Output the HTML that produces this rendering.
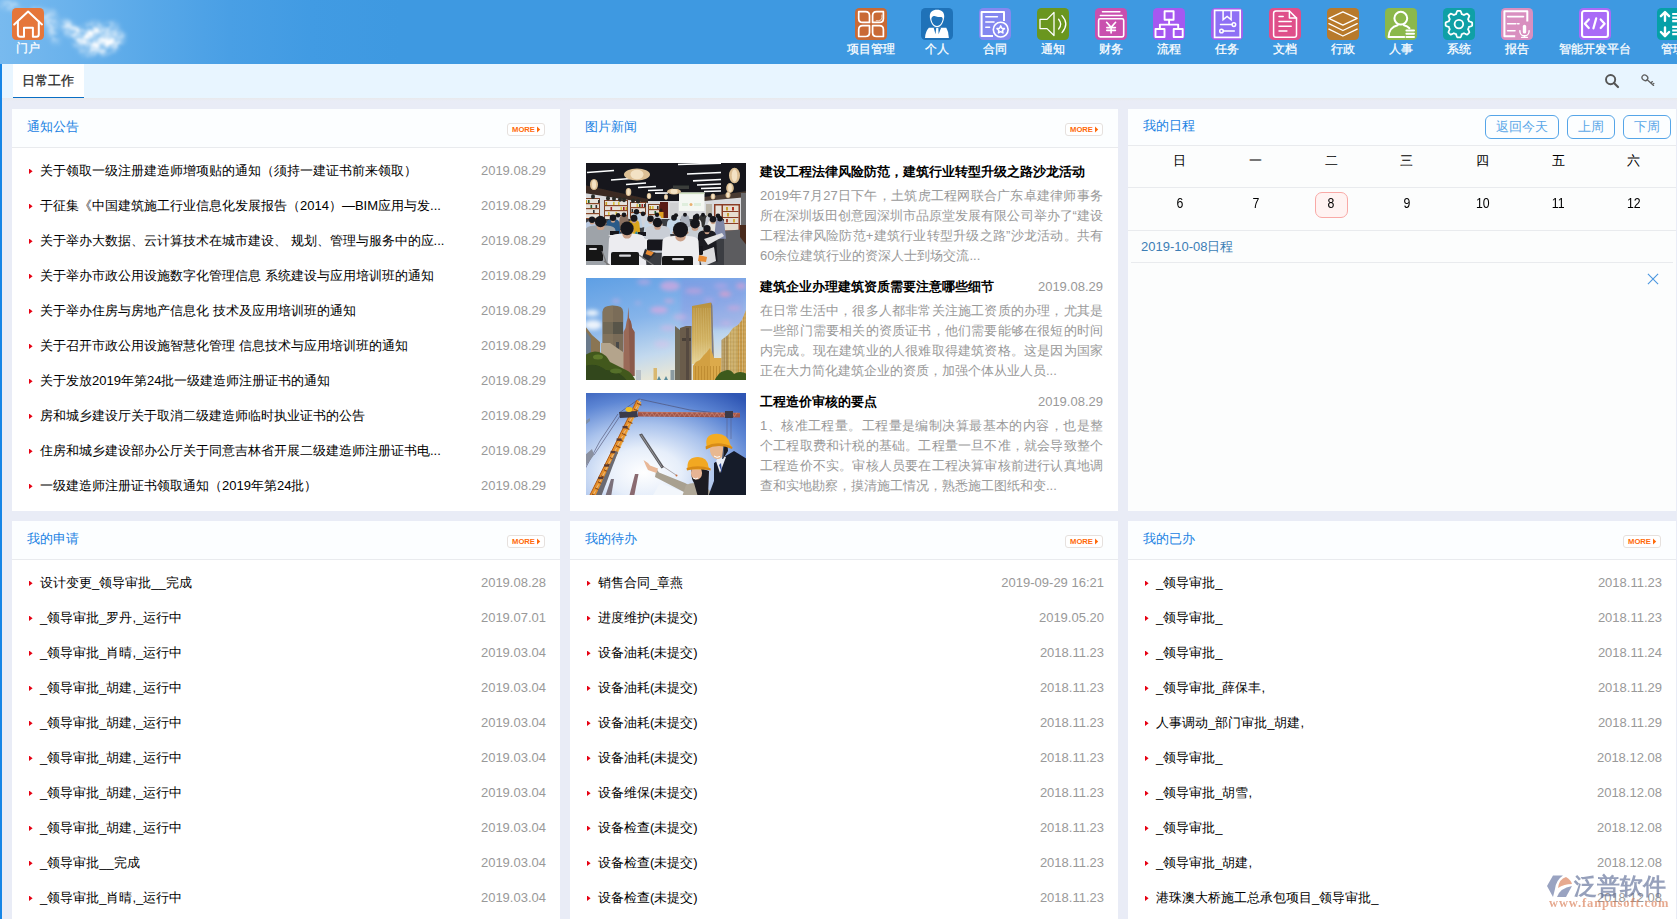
<!DOCTYPE html>
<html lang="zh">
<head>
<meta charset="utf-8">
<title>门户</title>
<style>
*{box-sizing:border-box;margin:0;padding:0}
html,body{width:1677px;height:919px;overflow:hidden}
body{font-family:"Liberation Sans",sans-serif;font-size:13px;color:#000;background:#e9ecf6;position:relative}
ul{list-style:none}
#hdr{position:absolute;left:0;top:0;width:1677px;height:64px;overflow:hidden;
 background:linear-gradient(90deg,#78baef 0px,#6ab2ec 70px,#58a8e8 150px,#499fe5 230px,#419be3 310px,#3e99e1 400px,#3e99e1 1677px)}
.ni{position:absolute;top:8px;width:32px;height:50px}
.ni svg{display:block}
.ni b{position:absolute;left:-40px;width:112px;top:34px;-webkit-text-stroke:0.25px #fff;text-align:center;font-weight:normal;font-size:12px;line-height:15px;color:#fff;white-space:nowrap}
#stripe{position:absolute;left:0;top:64px;width:2px;height:855px;background:#1685e6}
#tabs{position:absolute;left:2px;top:64px;width:1675px;height:34px;background:#e8f5ff}
#tabs .tab{position:absolute;left:11px;top:0;width:71px;height:34px;background:#fff;border-bottom:1px solid #0a6ec4;
 text-align:center;padding-right:2px;line-height:34px;font-size:13px;color:#2a2a2a;-webkit-text-stroke:0.3px #2a2a2a}
#tabshadow{position:absolute;left:2px;top:98px;width:1675px;height:3px;background:linear-gradient(#e8e9ec,#e9ecf6)}
.tic{position:absolute;top:9px}
.panel{position:absolute;background:#fff;overflow:hidden}
.ph{height:38px;border-bottom:1px solid #e9ebee;box-sizing:content-box;position:relative;background:#fcfeff}
.ph .t{position:absolute;left:15px;top:0;line-height:36px;font-size:13px;color:#1b82e3}
.more{position:absolute;right:15px;top:14px;width:38px;height:13px;border:1px solid #e6e1de;border-radius:3px;background:#fff}
.more svg{display:block}
ul.lst{padding-top:5px}
ul.lst li{height:35px;line-height:36px;position:relative;padding-left:28px;white-space:nowrap;font-size:13px}
ul.lst li:before{content:"";position:absolute;left:17px;top:15.6px;width:3.6px;height:5.4px;background:#e60012;clip-path:polygon(0 0,100% 50%,0 100%)}
ul.lst li span{position:absolute;right:14px;top:0;color:#999}
.news{position:absolute;left:16px;width:517px;height:102px}
.news .im{position:absolute;left:0;top:0;width:160px;height:102px;overflow:hidden}
.news .im svg{display:block}
.news h4{position:absolute;left:174px;top:0;font-size:13px;line-height:18px;font-weight:bold;white-space:nowrap}
.news .d{position:absolute;right:0;top:0;line-height:18px;color:#999}
.news .tx{position:absolute;left:174px;top:23px;width:343px;color:#999;line-height:20px}
.news .tx div{height:20px;text-align:justify;text-align-last:justify;overflow:hidden}
.news .tx div.l{text-align-last:left}
.cbtn{position:absolute;top:6px;height:24px;border:1px solid #55a5e8;border-radius:6px;color:#5aa7e8;font-size:13px;line-height:21px;text-align:center}
.cal{position:absolute;left:14px;width:530px;display:flex}
.cal div{width:75.67px;text-align:center;font-size:13px}
.cal i{display:inline-block;font-style:normal;font-size:14px;transform:scaleX(.88)}
.today{position:absolute;left:187px;top:83px;width:33px;height:26px;border:1px solid #f9a9a6;border-radius:7px;background:#fff3f2}
.hl{position:absolute;left:0;width:548px;height:1px;background:#e9ebee}
</style>
</head>
<body>
<div id="hdr"><svg style="position:absolute;left:0;top:0" width="180" height="64" viewBox="0 0 180 64"><defs><filter id="cb" x="-20%" y="-20%" width="140%" height="140%"><feGaussianBlur stdDeviation="2.2" result="b"/><feTurbulence type="fractalNoise" baseFrequency="0.11 0.13" numOctaves="3" seed="7" result="n"/><feColorMatrix in="n" type="matrix" values="0 0 0 0 1  0 0 0 0 1  0 0 0 0 1  1.9 0 0 0 -0.38" result="m"/><feComposite in="b" in2="m" operator="in" result="c"/><feGaussianBlur in="c" stdDeviation="0.8"/></filter></defs><g fill="#fff" style="filter:blur(4px)"><ellipse cx="99" cy="38" rx="20" ry="13" opacity="0.2"/><ellipse cx="50" cy="24" rx="7" ry="12" opacity="0.14"/></g><g filter="url(#cb)" fill="#fff"><ellipse cx="100" cy="38" rx="17" ry="12" opacity="0.95"/><ellipse cx="94" cy="29" rx="10" ry="7" opacity="0.7"/><ellipse cx="108" cy="44" rx="12" ry="8" opacity="0.8"/><ellipse cx="112" cy="27" rx="7" ry="5" opacity="0.6"/><ellipse cx="82" cy="42" rx="10" ry="6" opacity="0.7"/><ellipse cx="73" cy="31" rx="10" ry="6" opacity="0.75"/><ellipse cx="98" cy="51" rx="12" ry="5" opacity="0.55"/><ellipse cx="119" cy="38" rx="6" ry="7" opacity="0.6"/><ellipse cx="66" cy="24" rx="7" ry="4" opacity="0.65"/><ellipse cx="88" cy="52" rx="10" ry="4" opacity="0.5"/><ellipse cx="80" cy="35" rx="8" ry="6" opacity="0.6"/><ellipse cx="50" cy="18" rx="7" ry="9" opacity="0.6"/><ellipse cx="53" cy="32" rx="5" ry="8" opacity="0.5"/><ellipse cx="9" cy="5" rx="9" ry="4" opacity="0.6"/><ellipse cx="38" cy="11" rx="8" ry="4" opacity="0.45"/><ellipse cx="56" cy="40" rx="4" ry="5" opacity="0.4"/><ellipse cx="20" cy="12" rx="8" ry="4" opacity="0.3"/></g></svg>
<div class="ni" style="left:12px"><svg width="32" height="32" viewBox="0 0 32 32"><rect width="32" height="32" rx="4.5" fill="#e5763a"/><path d="M2.2 16.6 L16.1 3.6 L30 16.4" stroke="#fff" fill="none" stroke-linecap="round" stroke-linejoin="round" stroke-width="2"/><path d="M5.9 13.4 V26.3 Q5.9 28.8 8.4 28.8 H12 V19.8 H20.9 V28.8 H24.3 Q26.8 28.8 26.8 26.3 V13.4" stroke="#fff" fill="none" stroke-linecap="round" stroke-linejoin="round" stroke-width="2"/></svg><b style="top:33px">门户</b></div>
<div class="ni" style="left:855px"><svg width="32" height="32" viewBox="0 0 32 32"><rect width="32" height="32" rx="4.5" fill="#c96a35"/><g stroke="#fff" fill="none" stroke-linecap="round" stroke-linejoin="round" stroke-width="1.7" stroke-linejoin="miter"><path d="M3.7 3.7 H10.5 Q14.5 3.7 14.5 7.7 V14.4 H7.7 Q3.7 14.4 3.7 10.4Z"/><path d="M21.6 3.7 H28.4 V10.4 Q28.4 14.4 24.4 14.4 H17.6 V7.7 Q17.6 3.7 21.6 3.7Z"/><path d="M7.7 17.7 H14.5 V24.5 Q14.5 28.5 10.5 28.5 H3.7 V21.7 Q3.7 17.7 7.7 17.7Z"/><path d="M17.6 17.7 H24.4 Q28.4 17.7 28.4 21.7 V28.5 H21.6 Q17.6 28.5 17.6 24.5Z"/><path d="M26.9 7 V9.6 Q26.9 12.6 23.6 12.7 H21.2" stroke-width="0.8" opacity="0.85"/></g></svg><b>项目管理</b></div>
<div class="ni" style="left:921px"><svg width="32" height="32" viewBox="0 0 32 32"><rect width="32" height="32" rx="4.5" fill="#1f72b8"/><path d="M7.9 19.8 H25.3 Q27.6 23.5 27.9 29.9 H4 Q4.4 23.5 7.9 19.8Z" fill="#fff"/><path d="M12.6 19.5 L15.3 19.5 L14.5 26.2Z M17.3 19.5 L20.2 19.5 L17.6 26.2Z" fill="#1f72b8"/><path d="M16 1.7 C20.5 1.7 23.2 4 23.2 8 C23.2 9.5 23 10.5 22.8 11.2 C22.5 13 21.5 15.5 20.3 17 C19 18.6 17.5 19.1 16 19.1 C14.5 19.1 13 18.6 11.7 17 C10.5 15.5 9.5 13 9.2 11.2 C9 10.5 8.8 9.5 8.8 8 C8.8 4 11.5 1.7 16 1.7Z" fill="#fff"/><path d="M10.3 11 C10.6 9.5 11.5 8.3 13 8.1 C14.5 7.9 15.5 8.9 17 9 C18.5 9.1 20 8.6 21 9.3 C21.6 9.8 21.8 10.5 21.7 11.2 C21.4 13 20.5 15 19.5 16.3 C18.5 17.5 17.2 17.9 16 17.9 C14.8 17.9 13.5 17.5 12.5 16.3 C11.5 15 10.6 13 10.3 11Z" fill="#1f72b8"/></svg><b>个人</b></div>
<div class="ni" style="left:979px"><svg width="32" height="32" viewBox="0 0 32 32"><rect width="32" height="32" rx="4.5" fill="#8488f0"/><path d="M25 13 V4 H2.6 V28.1 H14" stroke="#fff" fill="none" stroke-linecap="butt" stroke-linejoin="round" stroke-width="2" /><g stroke="#fff" fill="none" stroke-linecap="round" stroke-linejoin="round" stroke-width="1.6"><path d="M6.8 8.7 H18.4 M6.8 14 H15 M6.8 19.3 H10.6"/></g><circle cx="21.7" cy="21.6" r="7.4" fill="#8488f0" stroke="#fff" stroke-width="1.6"/><path d="M21.70 17.90 L22.82 20.26 L25.41 20.59 L23.51 22.39 L23.99 24.96 L21.70 23.70 L19.41 24.96 L19.89 22.39 L17.99 20.59 L20.58 20.26Z" stroke="#fff" fill="none" stroke-linecap="round" stroke-linejoin="round" stroke-width="1.5"/></svg><b>合同</b></div>
<div class="ni" style="left:1037px"><svg width="32" height="32" viewBox="0 0 32 32"><rect width="32" height="32" rx="4.5" fill="#6a961f"/><g stroke="#fff" fill="none" stroke-linecap="round" stroke-linejoin="round" stroke-width="1.3"><path d="M3 11.4 H10 L17 4.4 V27.5 L10 20.6 H3Z"/><path d="M21.6 11.2 Q25.8 16 21.6 21"/><path d="M25 7.6 Q32.6 16 25 24.6"/></g></svg><b>通知</b></div>
<div class="ni" style="left:1095px"><svg width="32" height="32" viewBox="0 0 32 32"><rect width="32" height="32" rx="4.5" fill="#c94fae"/><g stroke="#fff" fill="none" stroke-linecap="round" stroke-linejoin="round"><path d="M7.4 3.8 H24.9 M5.3 7.5 H27.1" stroke-width="1.4"/><rect x="3.6" y="10.8" width="25.1" height="18.1" rx="1.6" stroke-width="1.6"/><path d="M11.6 14.3 L16.1 19.4 L20.6 14.3 M16.1 19.4 V25 M11.8 19.6 H20.4 M11.8 22.4 H20.4" stroke-width="1.6"/></g></svg><b>财务</b></div>
<div class="ni" style="left:1153px"><svg width="32" height="32" viewBox="0 0 32 32"><rect width="32" height="32" rx="4.5" fill="#a558f0"/><g stroke="#fff" fill="none" stroke-linecap="round" stroke-linejoin="round" stroke-width="1.9" stroke-linejoin="miter"><rect x="11.6" y="3.3" width="9" height="8.4"/><path d="M16.1 11.8 V16.6 M6.9 21 V16.6 H25.2 V21"/><rect x="2.5" y="21" width="9" height="8"/><rect x="20.7" y="21" width="9" height="8"/></g></svg><b>流程</b></div>
<div class="ni" style="left:1211px"><svg width="32" height="32" viewBox="0 0 32 32"><rect width="32" height="32" rx="4.5" fill="#a45fec"/><rect x="3.6" y="2.4" width="25.6" height="27" fill="#8e70f5" stroke="#fff" stroke-width="1.7"/><g stroke="#fff" fill="none" stroke-linecap="round" stroke-linejoin="round" stroke-width="1.5"><path d="M12.1 2.8 V11.6 L16.1 8.4 L20.1 11.6 V2.8" stroke-linejoin="miter"/><path d="M9.5 16.6 H21 M12.4 23 H23.3"/><circle cx="22.9" cy="16.6" r="1.8"/><circle cx="10.5" cy="23" r="1.8"/></g></svg><b>任务</b></div>
<div class="ni" style="left:1269px"><svg width="32" height="32" viewBox="0 0 32 32"><rect width="32" height="32" rx="4.5" fill="#df4f8a"/><g stroke="#fff" fill="none" stroke-linecap="round" stroke-linejoin="round" stroke-width="1.5"><path d="M7 3 H20.4 L27.5 10.1 V26.9 Q27.5 29.2 25.2 29.2 H7 Q4.6 29.2 4.6 26.9 V5.3 Q4.6 3 7 3Z"/><path d="M20.4 3 V10.1 H27.5"/><path d="M10 8.6 H14.2 M10 13.4 H22.2 M10 18.2 H22.2 M10 23 H17.9"/></g></svg><b>文档</b></div>
<div class="ni" style="left:1327px"><svg width="32" height="32" viewBox="0 0 32 32"><rect width="32" height="32" rx="4.5" fill="#b87a2b"/><g stroke="#fff" fill="none" stroke-linecap="round" stroke-linejoin="round" stroke-width="1.3"><path d="M1.9 10.3 L15.9 3.8 L30.2 10.3 L15.9 17.2Z"/><path d="M1.9 15.6 L15.9 22.5 L30.2 15.6"/><path d="M1.9 21.1 L15.9 28 L30.2 21.1"/></g></svg><b>行政</b></div>
<div class="ni" style="left:1385px"><svg width="32" height="32" viewBox="0 0 32 32"><rect width="32" height="32" rx="4.5" fill="#8bb84b"/><g stroke="#fff" fill="none" stroke-linecap="round" stroke-linejoin="round" stroke-width="2"><circle cx="15.8" cy="10.2" r="6.4"/><path d="M19.2 28.9 H3.6 C3.6 22.5 7.5 18.4 12.6 17.2 M19 17.2 C21.2 17.8 23 18.8 24.4 20.2"/><path d="M21.4 22.6 H29 M21.4 25.8 H29 M21.4 29 H29"/></g></svg><b>人事</b></div>
<div class="ni" style="left:1443px"><svg width="32" height="32" viewBox="0 0 32 32"><rect width="32" height="32" rx="4.5" fill="#0fa0a6"/><path d="M29.20 16.10 L29.19 16.62 L29.16 17.14 L29.11 17.66 L28.36 18.07 L27.52 18.41 L26.68 18.69 L25.91 18.92 L25.79 19.31 L25.66 19.70 L25.51 20.08 L25.34 20.45 L25.17 20.82 L24.97 21.18 L25.35 21.89 L25.75 22.68 L26.10 23.51 L26.34 24.33 L26.01 24.74 L25.67 25.13 L25.30 25.50 L24.93 25.87 L24.54 26.21 L24.13 26.54 L23.31 26.30 L22.48 25.95 L21.69 25.55 L20.98 25.17 L20.62 25.37 L20.25 25.54 L19.88 25.71 L19.50 25.86 L19.11 25.99 L18.72 26.11 L18.49 26.88 L18.21 27.72 L17.87 28.56 L17.46 29.31 L16.94 29.36 L16.42 29.39 L15.90 29.40 L15.38 29.39 L14.86 29.36 L14.34 29.31 L13.93 28.56 L13.59 27.72 L13.31 26.88 L13.08 26.11 L12.69 25.99 L12.30 25.86 L11.92 25.71 L11.55 25.54 L11.18 25.37 L10.82 25.17 L10.11 25.55 L9.32 25.95 L8.49 26.30 L7.67 26.54 L7.26 26.21 L6.87 25.87 L6.50 25.50 L6.13 25.13 L5.79 24.74 L5.46 24.33 L5.70 23.51 L6.05 22.68 L6.45 21.89 L6.83 21.18 L6.63 20.82 L6.46 20.45 L6.29 20.08 L6.14 19.70 L6.01 19.31 L5.89 18.92 L5.12 18.69 L4.28 18.41 L3.44 18.07 L2.69 17.66 L2.64 17.14 L2.61 16.62 L2.60 16.10 L2.61 15.58 L2.64 15.06 L2.69 14.54 L3.44 14.13 L4.28 13.79 L5.12 13.51 L5.89 13.28 L6.01 12.89 L6.14 12.50 L6.29 12.12 L6.46 11.75 L6.63 11.38 L6.83 11.02 L6.45 10.31 L6.05 9.52 L5.70 8.69 L5.46 7.87 L5.79 7.46 L6.13 7.07 L6.50 6.70 L6.87 6.33 L7.26 5.99 L7.67 5.66 L8.49 5.90 L9.32 6.25 L10.11 6.65 L10.82 7.03 L11.18 6.83 L11.55 6.66 L11.92 6.49 L12.30 6.34 L12.69 6.21 L13.08 6.09 L13.31 5.32 L13.59 4.48 L13.93 3.64 L14.34 2.89 L14.86 2.84 L15.38 2.81 L15.90 2.80 L16.42 2.81 L16.94 2.84 L17.46 2.89 L17.87 3.64 L18.21 4.48 L18.49 5.32 L18.72 6.09 L19.11 6.21 L19.50 6.34 L19.88 6.49 L20.25 6.66 L20.62 6.83 L20.98 7.03 L21.69 6.65 L22.48 6.25 L23.31 5.90 L24.13 5.66 L24.54 5.99 L24.93 6.33 L25.30 6.70 L25.67 7.07 L26.01 7.46 L26.34 7.87 L26.10 8.69 L25.75 9.52 L25.35 10.31 L24.97 11.02 L25.17 11.38 L25.34 11.75 L25.51 12.12 L25.66 12.50 L25.79 12.89 L25.91 13.28 L26.68 13.51 L27.52 13.79 L28.36 14.13 L29.11 14.54 L29.16 15.06 L29.19 15.58Z" stroke="#fff" fill="none" stroke-linecap="round" stroke-linejoin="round" stroke-width="1.8"/><circle cx="15.9" cy="16.1" r="4.3" stroke="#fff" fill="none" stroke-linecap="round" stroke-linejoin="round" stroke-width="1.8"/></svg><b>系统</b></div>
<div class="ni" style="left:1501px"><svg width="32" height="32" viewBox="0 0 32 32"><rect width="32" height="32" rx="4.5" fill="#d98fc0"/><path d="M26.3 13.6 V3.3 H3.4 V28.3 H14.2" stroke="#fff" fill="none" stroke-linecap="butt" stroke-linejoin="round" stroke-width="2"/><g stroke="#fff" fill="none" stroke-linecap="round" stroke-linejoin="round" stroke-width="1.6"><path d="M6.6 8.6 H22.5 M6.6 15.7 H14.8 M16.6 15.7 H18 M6.6 22.7 H14"/></g><rect x="21.8" y="16.8" width="3.4" height="8.8" rx="1.7" fill="#fff"/><g stroke="#fff" fill="none" stroke-linecap="round" stroke-linejoin="round" stroke-width="1.4"><path d="M18.9 22.6 V23.2 A4.6 4.6 0 0 0 28.1 23.2 V22.6"/><path d="M23.5 27.9 V29.3 M20.6 29.4 H26.4"/></g></svg><b>报告</b></div>
<div class="ni" style="left:1579px"><svg width="32" height="32" viewBox="0 0 32 32"><rect width="32" height="32" rx="4.5" fill="#a96bf7"/><rect x="3.05" y="3.05" width="25.9" height="25.9" rx="2" stroke="#fff" fill="none" stroke-linecap="round" stroke-linejoin="round" stroke-width="2.1"/><g stroke="#fff" fill="none" stroke-linecap="round" stroke-linejoin="round" stroke-width="2.2"><path d="M9.8 11.4 L5.9 15.7 L9.8 20 M17.2 10.4 L14.4 20.4 M21.7 11.4 L25.6 15.7 L21.7 20"/></g></svg><b>智能开发平台</b></div>
<div class="ni" style="left:1657px"><svg width="32" height="32" viewBox="0 0 32 32"><rect width="32" height="32" rx="4.5" fill="#06a0a8"/><g stroke="#fff" fill="none" stroke-linecap="round" stroke-linejoin="round" stroke-width="2.4" stroke-linejoin="miter" stroke-linecap="butt"><path d="M8 12.8 V5 M3.9 8.2 L8 4 L12.1 8.2 M8 19.4 V27.2 M3.9 24 L8 28.2 L12.1 24"/></g><g stroke="#fff" stroke-width="2.2"><path d="M15.2 6 H33 M15.2 9.6 H33 M15.2 13.2 H33 M15.2 18.9 H33 M15.2 22.5 H33 M15.2 26.1 H33"/></g></svg><b>管理</b></div>
</div>
<div id="stripe"></div>
<div id="tabs"><div class="tab">日常工作</div><svg class="tic" style="left:1602px" width="16" height="16" viewBox="0 0 16 16"><circle cx="6.6" cy="6.6" r="4.6" fill="none" stroke="#555" stroke-width="1.9"/><path d="M10 10 L14 14" stroke="#555" stroke-width="2.2" stroke-linecap="round"/></svg>
<svg class="tic" style="left:1638px" width="16" height="16" viewBox="0 0 16 16"><ellipse cx="4.9" cy="4.8" rx="3" ry="2.6" transform="rotate(40 4.9 4.8)" fill="none" stroke="#606060" stroke-width="1.35"/><path d="M7.2 6.8 L13.6 12.4 M10.8 10 L12.4 8.6 M12.6 11.6 L13.8 10.4" stroke="#606060" stroke-width="1.35" fill="none" stroke-linecap="round"/></svg></div>
<div id="tabshadow"></div>
<div class="panel" id="p1" style="left:12px;top:109px;width:548px;height:402px">
<div class="ph"><div class="t">通知公告</div><div class="more"><svg width="36" height="11" viewBox="0 0 36 11"><text x="4" y="8.4" font-family="Liberation Sans,sans-serif" font-size="7.4" font-weight="bold" fill="#ff6a0a" textLength="23" lengthAdjust="spacingAndGlyphs">MORE</text><path d="M29 2.6 L32.2 5.6 L29 8.6Z" fill="#ff6a0a"/></svg></div></div>
<ul class="lst">
<li>关于领取一级注册建造师增项贴的通知（须持一建证书前来领取）<span>2019.08.29</span></li>
<li>于征集《中国建筑施工行业信息化发展报告（2014）—BIM应用与发...<span>2019.08.29</span></li>
<li>关于举办大数据、云计算技术在城市建设、 规划、管理与服务中的应...<span>2019.08.29</span></li>
<li>关于举办市政公用设施数字化管理信息 系统建设与应用培训班的通知<span>2019.08.29</span></li>
<li>关于举办住房与房地产信息化 技术及应用培训班的通知<span>2019.08.29</span></li>
<li>关于召开市政公用设施智慧化管理 信息技术与应用培训班的通知<span>2019.08.29</span></li>
<li>关于发放2019年第24批一级建造师注册证书的通知<span>2019.08.29</span></li>
<li>房和城乡建设厅关于取消二级建造师临时执业证书的公告<span>2019.08.29</span></li>
<li>住房和城乡建设部办公厅关于同意吉林省开展二级建造师注册证书电...<span>2019.08.29</span></li>
<li>一级建造师注册证书领取通知（2019年第24批）<span>2019.08.29</span></li>
</ul>
</div>
<div class="panel" id="p2" style="left:570px;top:109px;width:548px;height:402px">
<div class="ph"><div class="t">图片新闻</div><div class="more"><svg width="36" height="11" viewBox="0 0 36 11"><text x="4" y="8.4" font-family="Liberation Sans,sans-serif" font-size="7.4" font-weight="bold" fill="#ff6a0a" textLength="23" lengthAdjust="spacingAndGlyphs">MORE</text><path d="M29 2.6 L32.2 5.6 L29 8.6Z" fill="#ff6a0a"/></svg></div></div>
<div class="news" style="top:54px"><div class="im"><svg width="160" height="102" viewBox="0 0 160 102"><defs><filter id="b1" x="-5%" y="-5%" width="110%" height="110%"><feGaussianBlur stdDeviation="0.55"/></filter><filter id="b1b"><feGaussianBlur stdDeviation="1.2"/></filter></defs><g filter="url(#b1)"><rect x="-2" y="-2" width="164" height="106" fill="#16191f"/><path d="M-2 26 L60 38 L100 38 L162 30 V70 H-2Z" fill="#d9dadd"/><path d="M-2 22 L62 36 L62 40 L-2 30Z" fill="#3a2a22"/><path d="M118 34 L162 28 V34 L118 38Z" fill="#4a3a30"/><rect x="-2" y="35" width="16" height="23" fill="#7a4028"/><rect x="-1" y="36" width="14" height="22" fill="#e6e2dc"/><rect x="-2" y="40.0" width="16" height="1.2" fill="#8a4a2c"/><rect x="-2" y="45.0" width="16" height="1.2" fill="#8a4a2c"/><rect x="-2" y="50.0" width="16" height="1.2" fill="#8a4a2c"/><rect x="-2" y="55.0" width="16" height="1.2" fill="#8a4a2c"/><rect x="-0.5" y="37" width="1.6" height="3" fill="#c8a020"/><rect x="2.0" y="37" width="1.6" height="3" fill="#2a5a2a"/><rect x="4.5" y="42" width="1.6" height="3" fill="#2a5a2a"/><rect x="7.0" y="47" width="1.6" height="3" fill="#333"/><rect x="9.5" y="42" width="1.6" height="3" fill="#333"/><rect x="12.0" y="37" width="1.6" height="3" fill="#333"/><rect x="18" y="37" width="24" height="19" fill="#7a4028"/><rect x="19" y="38" width="22" height="18" fill="#e6e2dc"/><rect x="18" y="42.0" width="24" height="1.2" fill="#8a4a2c"/><rect x="18" y="47.0" width="24" height="1.2" fill="#8a4a2c"/><rect x="18" y="52.0" width="24" height="1.2" fill="#8a4a2c"/><rect x="19.5" y="39" width="1.6" height="3" fill="#c8a020"/><rect x="22.0" y="49" width="1.6" height="3" fill="#d9c040"/><rect x="24.5" y="44" width="1.6" height="3" fill="#a02020"/><rect x="27.0" y="39" width="1.6" height="3" fill="#d9c040"/><rect x="29.5" y="49" width="1.6" height="3" fill="#d9c040"/><rect x="32.0" y="39" width="1.6" height="3" fill="#d9c040"/><rect x="34.5" y="44" width="1.6" height="3" fill="#d9c040"/><rect x="37.0" y="44" width="1.6" height="3" fill="#a02020"/><rect x="39.5" y="44" width="1.6" height="3" fill="#c8a020"/><rect x="44" y="39" width="16" height="16" fill="#7a4028"/><rect x="45" y="40" width="14" height="15" fill="#e6e2dc"/><rect x="44" y="44.0" width="16" height="1.2" fill="#8a4a2c"/><rect x="44" y="49.0" width="16" height="1.2" fill="#8a4a2c"/><rect x="44" y="54.0" width="16" height="1.2" fill="#8a4a2c"/><rect x="45.5" y="46" width="1.6" height="3" fill="#333"/><rect x="48.0" y="51" width="1.6" height="3" fill="#c8a020"/><rect x="50.5" y="41" width="1.6" height="3" fill="#d9c040"/><rect x="53.0" y="41" width="1.6" height="3" fill="#2a5a2a"/><rect x="55.5" y="41" width="1.6" height="3" fill="#a02020"/><rect x="58.0" y="41" width="1.6" height="3" fill="#333"/><rect x="62" y="41" width="12" height="13" fill="#7a4028"/><rect x="63" y="42" width="10" height="12" fill="#e6e2dc"/><rect x="62" y="46.0" width="12" height="1.2" fill="#8a4a2c"/><rect x="62" y="51.0" width="12" height="1.2" fill="#8a4a2c"/><rect x="63.5" y="43" width="1.6" height="3" fill="#c8a020"/><rect x="66.0" y="43" width="1.6" height="3" fill="#d9c040"/><rect x="68.5" y="48" width="1.6" height="3" fill="#2a5a2a"/><rect x="71.0" y="43" width="1.6" height="3" fill="#333"/><ellipse cx="7" cy="33.7" rx="2" ry="2.4" fill="#2a2a26"/><ellipse cx="22" cy="35.2" rx="2" ry="2.4" fill="#2a2a26"/><ellipse cx="28" cy="35.8" rx="2" ry="2.4" fill="#2a2a26"/><ellipse cx="34" cy="36.4" rx="2" ry="2.4" fill="#2a2a26"/><ellipse cx="38" cy="36.8" rx="2" ry="2.4" fill="#2a2a26"/><ellipse cx="47" cy="37.7" rx="2" ry="2.4" fill="#2a2a26"/><ellipse cx="52" cy="38.2" rx="2" ry="2.4" fill="#2a2a26"/><rect x="74" y="39" width="8" height="16" fill="#5a1f18"/><rect x="84" y="40" width="8" height="14" fill="#cfd0d2"/><rect x="93" y="29.5" width="25.5" height="18.5" fill="#f4f7f2"/><rect x="93" y="29.5" width="25.5" height="1.6" fill="#cfe0c0"/><circle cx="105" cy="41.5" r="1.5" fill="#e8b070"/><rect x="96" y="40" width="6" height="3" fill="#dfeedd"/><rect x="108" y="40" width="7" height="3" fill="#dfeedd"/><rect x="120" y="41" width="6" height="13" fill="#b9b4a8"/><rect x="128" y="41" width="26" height="28" fill="#8a3e26"/><rect x="129.5" y="42.5" width="6" height="25" fill="#e8e4de"/><rect x="137" y="42.5" width="15.5" height="25" fill="#e6ddd0"/><rect x="137" y="48" width="15.5" height="1" fill="#8a3e26"/><rect x="137" y="54" width="15.5" height="1" fill="#8a3e26"/><rect x="137" y="60" width="15.5" height="1" fill="#8a3e26"/><rect x="140" y="44" width="2" height="3.5" fill="#c9a030"/><rect x="146" y="44" width="2" height="3.5" fill="#b03020"/><rect x="141" y="50" width="2" height="3.5" fill="#c9a030"/><rect x="147" y="56" width="2" height="3.5" fill="#d0b040"/><rect x="140" y="56" width="2" height="3.5" fill="#a04030"/><rect x="155" y="30" width="7" height="40" fill="#6a6a6c"/><path d="M136 68 L162 66 V104 H112 Z" fill="#5c5c5e"/><path d="M154 62 h8 v22 l-8 -10z" fill="#4a2a1e"/><path d="M1 9.5 L28 7.5" stroke="#fff" stroke-width="1.7"/><path d="M25 17 L45 15.5" stroke="#fff" stroke-width="1.7"/><path d="M40 21.5 L60 20" stroke="#fff" stroke-width="1.7"/><path d="M52 24.5 L70 23.5" stroke="#fff" stroke-width="1.7"/><path d="M62 27.5 L77 27" stroke="#fff" stroke-width="1.7"/><path d="M69 30.2 L82 30" stroke="#fff" stroke-width="1.7"/><path d="M92 1.5 L135 0.2" stroke="#fff" stroke-width="1.7"/><path d="M101 11 L135 9.5" stroke="#fff" stroke-width="1.7"/><path d="M107 17.8 L135 16.5" stroke="#fff" stroke-width="1.7"/><path d="M111 22 L135 21" stroke="#fff" stroke-width="1.7"/><path d="M115 25.5 L135 24.8" stroke="#fff" stroke-width="1.7"/><path d="M118 28.5 L135 28" stroke="#fff" stroke-width="1.7"/><ellipse cx="51" cy="11.5" rx="13" ry="6" fill="#dcbf94"/><ellipse cx="51" cy="11.5" rx="6.5" ry="4.8" fill="#f3e2c4"/><ellipse cx="8" cy="21.5" rx="4" ry="5.5" fill="#dcbf94"/><ellipse cx="8" cy="21.5" rx="2" ry="4.4" fill="#f3e2c4"/><ellipse cx="42.5" cy="29" rx="2.8" ry="4" fill="#dcbf94"/><ellipse cx="42.5" cy="29" rx="1.4" ry="3.2" fill="#f3e2c4"/><ellipse cx="63" cy="33" rx="2.2" ry="3" fill="#dcbf94"/><ellipse cx="63" cy="33" rx="1.1" ry="2.4" fill="#f3e2c4"/><ellipse cx="80" cy="34" rx="2" ry="2.8" fill="#dcbf94"/><ellipse cx="80" cy="34" rx="1" ry="2.24" fill="#f3e2c4"/><ellipse cx="88" cy="28.5" rx="7" ry="3" fill="#dcbf94"/><ellipse cx="88" cy="28.5" rx="3.5" ry="2.4" fill="#f3e2c4"/><ellipse cx="148.5" cy="12.5" rx="5.5" ry="7.8" fill="#dcbf94"/><ellipse cx="148.5" cy="12.5" rx="2.75" ry="6.24" fill="#f3e2c4"/><ellipse cx="144" cy="25" rx="3.8" ry="5" fill="#dcbf94"/><ellipse cx="144" cy="25" rx="1.9" ry="4" fill="#f3e2c4"/><ellipse cx="127" cy="33.5" rx="2.3" ry="3" fill="#dcbf94"/><ellipse cx="127" cy="33.5" rx="1.15" ry="2.4" fill="#f3e2c4"/><ellipse cx="142" cy="32" rx="2.5" ry="3" fill="#dcbf94"/><ellipse cx="142" cy="32" rx="1.25" ry="2.4" fill="#f3e2c4"/><rect x="87" y="22.5" width="16" height="3.5" fill="#3a3c3a"/><rect x="72.5" y="49" width="5" height="6" fill="#e0a020"/><circle cx="75" cy="47" r="1.6" fill="#2a1a14"/><rect x="-2" y="56" width="140" height="50" fill="#3a3c42"/><path d="M27.5 57.75 q0 -4.5 2.7 -5 q1.8 -1.2 3.6 0 q2.7 0.5 2.7 5 l1.5 8 h-12z" fill="#c8ccd4"/><ellipse cx="32" cy="52.3" rx="2.25" ry="2.3" fill="#17171a"/><path d="M33.5 57.34 q0 -4.5 2.7 -5 q1.8 -1.2 3.6 0 q2.7 0.5 2.7 5 l1.5 8 h-12z" fill="#8a7060"/><ellipse cx="38" cy="51.792" rx="2.34" ry="2.392" fill="#17171a"/><path d="M52.5 56.34 q0 -4.5 2.7 -5 q1.8 -1.2 3.6 0 q2.7 0.5 2.7 5 l1.5 8 h-12z" fill="#d0d4dc"/><ellipse cx="57" cy="50.792" rx="2.34" ry="2.392" fill="#17171a"/><path d="M66.5 57.16 q0 -4.5 2.7 -5 q1.8 -1.2 3.6 0 q2.7 0.5 2.7 5 l1.5 8 h-12z" fill="#c8ccd4"/><ellipse cx="71" cy="51.808" rx="2.16" ry="2.208" fill="#17171a"/><path d="M85.5 57.57 q0 -4.5 2.7 -5 q1.8 -1.2 3.6 0 q2.7 0.5 2.7 5 l1.5 8 h-12z" fill="#d6dae0"/><ellipse cx="90" cy="52.316" rx="2.07" ry="2.116" fill="#17171a"/><path d="M94.5 56.98 q0 -4.5 2.7 -5 q1.8 -1.2 3.6 0 q2.7 0.5 2.7 5 l1.5 8 h-12z" fill="#aab0bc"/><ellipse cx="99" cy="51.824" rx="1.98" ry="2.024" fill="#17171a"/><path d="M106.5 58.16 q0 -4.5 2.7 -5 q1.8 -1.2 3.6 0 q2.7 0.5 2.7 5 l1.5 8 h-12z" fill="#e0e0e2"/><ellipse cx="111" cy="52.808" rx="2.16" ry="2.208" fill="#17171a"/><path d="M112.5 56.98 q0 -4.5 2.7 -5 q1.8 -1.2 3.6 0 q2.7 0.5 2.7 5 l1.5 8 h-12z" fill="#333"/><ellipse cx="117" cy="51.824" rx="1.98" ry="2.024" fill="#17171a"/><path d="M119.5 57.66 q0 -4.5 2.7 -5 q1.8 -1.2 3.6 0 q2.7 0.5 2.7 5 l1.5 8 h-12z" fill="#c4c8d0"/><ellipse cx="124" cy="52.308" rx="2.16" ry="2.208" fill="#17171a"/><path d="M127.5 58.34 q0 -4.5 2.7 -5 q1.8 -1.2 3.6 0 q2.7 0.5 2.7 5 l1.5 8 h-12z" fill="#9aa0b8"/><ellipse cx="132" cy="52.792" rx="2.34" ry="2.392" fill="#17171a"/><path d="M46 54.7 q0 -4.5 2.7 -5 q1.8 -1.2 3.6 0 q2.7 0.5 2.7 5 l1.5 10 h-12z" fill="#bcd0e4"/><ellipse cx="50.5" cy="48.76" rx="2.7" ry="2.76" fill="#17171a"/><path d="M81 60.88 q0 -4.5 4.2 -5 q2.8 -1.2 5.6 0 q4.2 0.5 4.2 5 l1.5 10 h-17z" fill="#c4d8ea"/><ellipse cx="88" cy="54.744" rx="2.88" ry="2.944" fill="#17171a"/><path d="M-1 63.15 q0 -4.5 4.2 -5 q2.8 -1.2 5.6 0 q4.2 0.5 4.2 5 l1.5 14 h-17z" fill="#b8c8e0"/><ellipse cx="6" cy="59.625" rx="2.17" ry="1.925" fill="#caa088"/><ellipse cx="6" cy="57.875" rx="3.43" ry="1.05" fill="#c89a80"/><ellipse cx="6" cy="56.72" rx="3.15" ry="3.22" fill="#17171a"/><path d="M20.5 61.24 q0 -4.5 3.9 -5 q2.6 -1.2 5.2 0 q3.9 0.5 3.9 5 l1.5 14 h-16z" fill="#2c5a88"/><ellipse cx="27" cy="57.7" rx="2.232" ry="1.98" fill="#caa088"/><ellipse cx="27" cy="55.9" rx="3.528" ry="1.08" fill="#c89a80"/><ellipse cx="27" cy="54.712" rx="3.24" ry="3.312" fill="#17171a"/><path d="M42.5 61.92 q0 -4.5 3.3 -5 q2.2 -1.2 4.4 0 q3.3 0.5 3.3 5 l1.5 16 h-14z" fill="#d9a51e"/><ellipse cx="48" cy="58.35" rx="2.356" ry="2.09" fill="#caa088"/><ellipse cx="48" cy="56.45" rx="3.724" ry="1.14" fill="#c89a80"/><ellipse cx="48" cy="55.196" rx="3.42" ry="3.496" fill="#17171a"/><path d="M58.5 62.24 q0 -4.5 3.6 -5 q2.4 -1.2 4.8 0 q3.6 0.5 3.6 5 l1.5 12 h-15z" fill="#c6d6e6"/><ellipse cx="64.5" cy="58.7" rx="2.232" ry="1.98" fill="#caa088"/><ellipse cx="64.5" cy="56.9" rx="3.528" ry="1.08" fill="#c89a80"/><ellipse cx="64.5" cy="55.712" rx="3.24" ry="3.312" fill="#17171a"/><path d="M104.5 61.15 q0 -4.5 3.3 -5 q2.2 -1.2 4.4 0 q3.3 0.5 3.3 5 l1.5 10 h-14z" fill="#e4e4e6"/><ellipse cx="110" cy="57.625" rx="2.17" ry="1.925" fill="#caa088"/><ellipse cx="110" cy="55.875" rx="3.43" ry="1.05" fill="#c89a80"/><ellipse cx="110" cy="54.72" rx="3.15" ry="3.22" fill="#17171a"/><path d="M121.5 62.74 q0 -4.5 3.3 -5 q2.2 -1.2 4.4 0 q3.3 0.5 3.3 5 l1.5 12 h-14z" fill="#e8e6e2"/><ellipse cx="127" cy="59.2" rx="2.232" ry="1.98" fill="#caa088"/><ellipse cx="127" cy="57.4" rx="3.528" ry="1.08" fill="#c89a80"/><ellipse cx="127" cy="56.212" rx="3.24" ry="3.312" fill="#17171a"/><path d="M129.5 61.7 q0 -4.5 2.7 -5 q1.8 -1.2 3.6 0 q2.7 0.5 2.7 5 l1.5 14 h-12z" fill="#8088a8"/><ellipse cx="134" cy="55.76" rx="2.7" ry="2.76" fill="#17171a"/><path d="M59 67.68 q0 -4.5 7.5 -5 q5 -1.2 10 0 q7.5 0.5 7.5 5 l1.5 22 h-28z" fill="#c9ced6"/><ellipse cx="71.5" cy="63.9" rx="3.224" ry="2.86" fill="#caa088"/><ellipse cx="71.5" cy="61.3" rx="5.096" ry="1.56" fill="#c89a80"/><ellipse cx="71.5" cy="59.584" rx="4.68" ry="4.784" fill="#17171a"/><path d="M97 68.86 q0 -4.5 7.2 -5 q4.8 -1.2 9.6 0 q7.2 0.5 7.2 5 l1.5 24 h-27z" fill="#c8ced4"/><ellipse cx="109" cy="65.05" rx="3.348" ry="2.97" fill="#caa088"/><ellipse cx="109" cy="62.35" rx="5.292" ry="1.62" fill="#c89a80"/><ellipse cx="109" cy="60.568" rx="4.86" ry="4.968" fill="#17171a"/><path d="M112 72.6 q0 -4.5 5.4 -5 q3.6 -1.2 7.2 0 q5.4 0.5 5.4 5 l1.5 26 h-21z" fill="#1c1c20"/><ellipse cx="121" cy="69" rx="2.48" ry="2.2" fill="#caa088"/><ellipse cx="121" cy="67" rx="3.92" ry="1.2" fill="#c89a80"/><ellipse cx="121" cy="65.68" rx="3.6" ry="3.68" fill="#17171a"/><path d="M38 66 q4 -6 9 -1 l1 12 h-12z" fill="#d8b030"/><path d="M-0.5 67.58 q0 -4.5 9 -5 q6 -1.2 12 0 q9 0.5 9 5 l1.5 40 h-33z" fill="#9ea3a9"/><ellipse cx="14.5" cy="63.65" rx="3.844" ry="3.41" fill="#caa088"/><ellipse cx="14.5" cy="60.55" rx="6.076" ry="1.86" fill="#c89a80"/><ellipse cx="14.5" cy="58.504" rx="5.58" ry="5.704" fill="#17171a"/><path d="M22 72 L36 71 L62 80 L44 84Z" fill="#e8e8ea"/><path d="M50 77 L62 76 L66 84 L54 86Z" fill="#f0f0f2"/><path d="M118 76 L136 70 L138 73 L122 82Z" fill="#e4e4e6"/><path d="M112 90 L128 84 L130 98 L116 104Z" fill="#dcdcde"/><ellipse cx="50.5" cy="72" rx="1.4" ry="3.6" fill="#2a8aa8"/><rect x="61" y="76.5" width="18" height="11" rx="1.5" fill="#15161a"/><rect x="103" y="83" width="14" height="9" rx="1.5" fill="#15161a"/><rect x="24" y="68" width="9" height="4" fill="#15161a"/><rect x="52" y="69" width="8" height="4" fill="#15161a"/><path d="M23 75.66 q0 -4.5 10.8 -5 q7.2 -1.2 14.4 0 q10.8 0.5 10.8 5 l1.5 30 h-39z" fill="#ececf0"/><ellipse cx="41" cy="71.55" rx="4.588" ry="4.07" fill="#caa088"/><ellipse cx="41" cy="67.85" rx="7.252" ry="2.22" fill="#c89a80"/><ellipse cx="41" cy="65.408" rx="6.66" ry="6.808" fill="#17171a"/><path d="M76.5 78.06 q0 -4.5 10.8 -5 q7.2 -1.2 14.4 0 q10.8 0.5 10.8 5 l1.5 30 h-39z" fill="#eeeef0"/><ellipse cx="94.5" cy="73.8" rx="5.208" ry="4.62" fill="#caa088"/><ellipse cx="94.5" cy="69.6" rx="8.232" ry="2.52" fill="#c89a80"/><ellipse cx="94.5" cy="66.828" rx="7.56" ry="7.728" fill="#17171a"/><path d="M59 86 L70 90 L62 98 L56 95Z" fill="#2a2c30"/><path d="M61 87 L68 89.5 L65 93 L59.5 91Z" fill="#e88a30"/><path d="M113 92 l8 2 l-1 5 l-8 -1z" fill="#e88a30"/><rect x="-2" y="82" width="19" height="16" rx="1.5" fill="#121318"/><rect x="3" y="85" width="8" height="2" rx="1" fill="#d8d8da"/><rect x="25" y="89" width="28" height="15" rx="2" fill="#121318"/><rect x="33" y="91.5" width="12" height="2.2" rx="1" fill="#d8d8da"/><rect x="76" y="93" width="31" height="11" rx="2" fill="#121318"/><rect x="86" y="95" width="12" height="2.2" rx="1" fill="#d8d8da"/><path d="M16 88 L22 104 M53 92 L70 104 M18 98 L26 104" stroke="#777" stroke-width="1.2"/></g></svg></div><h4>建设工程法律风险防范，建筑行业转型升级之路沙龙活动</h4><div class="d"></div><div class="tx"><div>2019年7月27日下午，土筑虎工程网联合广东卓建律师事务</div><div>所在深圳坂田创意园深圳市品原堂发展有限公司举办了“建设</div><div>工程法律风险防范+建筑行业转型升级之路”沙龙活动。共有</div><div class="l">60余位建筑行业的资深人士到场交流...</div></div></div>
<div class="news" style="top:169px"><div class="im"><svg width="160" height="102" viewBox="0 0 160 102"><defs><linearGradient id="sk2" x1="0" y1="0" x2="0.35" y2="1"><stop offset="0" stop-color="#5e9fe4"/><stop offset="0.45" stop-color="#86b4ea"/><stop offset="0.8" stop-color="#c3d9ee"/><stop offset="1" stop-color="#e6e6d8"/></linearGradient><filter id="b2" x="-5%" y="-5%" width="110%" height="110%"><feGaussianBlur stdDeviation="0.6"/></filter><filter id="b2c" x="-30%" y="-30%" width="160%" height="160%"><feGaussianBlur stdDeviation="2.2"/></filter><linearGradient id="gold" x1="0" y1="0" x2="0" y2="1"><stop offset="0" stop-color="#b8913e"/><stop offset="0.6" stop-color="#d0b060"/><stop offset="1" stop-color="#e6d49a"/></linearGradient><linearGradient id="gld2" x1="0" y1="0" x2="1" y2="0"><stop offset="0" stop-color="#a58a4c"/><stop offset="1" stop-color="#d09a40"/></linearGradient></defs><rect width="160" height="102" fill="url(#sk2)"/><rect x="95" y="0" width="65" height="50" fill="#8d8fe0" opacity="0.35" filter="url(#b2c)"/><g filter="url(#b2c)"><ellipse cx="84" cy="8" rx="10" ry="5" fill="#e4a8dc" opacity="0.64"/><ellipse cx="58" cy="4" rx="7" ry="3" fill="#d8a8e0" opacity="0.48"/><ellipse cx="108" cy="13" rx="9" ry="3" fill="#e0a0d8" opacity="0.48"/><ellipse cx="139" cy="16" rx="6" ry="2.5" fill="#f0a0c8" opacity="0.72"/><ellipse cx="155" cy="8" rx="5" ry="3" fill="#f0a0d0" opacity="0.56"/><ellipse cx="73" cy="32" rx="9" ry="3.5" fill="#e8a8dc" opacity="0.64"/><ellipse cx="83" cy="23" rx="5" ry="2" fill="#eaa8d8" opacity="0.56"/><ellipse cx="94" cy="39" rx="7" ry="3" fill="#e0b0e0" opacity="0.48"/><ellipse cx="82" cy="50" rx="8" ry="3" fill="#dcb4e4" opacity="0.48"/><ellipse cx="148" cy="30" rx="7" ry="2.5" fill="#e6a4d8" opacity="0.48"/><ellipse cx="135" cy="8" rx="7" ry="3" fill="#d0a8e4" opacity="0.4"/><ellipse cx="30" cy="23" rx="4" ry="2" fill="#e4b0e0" opacity="0.48"/><ellipse cx="52" cy="25" rx="3" ry="1.5" fill="#e4b0e0" opacity="0.48"/><ellipse cx="76" cy="66" rx="8" ry="4" fill="#e0c0e8" opacity="0.4"/><ellipse cx="140" cy="45" rx="5" ry="2" fill="#e0b0e0" opacity="0.4"/><ellipse cx="6" cy="35" rx="7" ry="3" fill="#fff" opacity="0.9"/><ellipse cx="7" cy="47" rx="9" ry="5" fill="#fff" opacity="0.85"/><ellipse cx="123" cy="22" rx="5" ry="2" fill="#dca8e0" opacity="0.4"/></g><g filter="url(#b2)"><rect x="50" y="92" width="5" height="12" fill="#b9c2c8"/><rect x="67.5" y="90" width="3.5" height="14" fill="#d9b870"/><rect x="84.5" y="92" width="4" height="12" fill="#8a9aa0"/><path d="M70 104 l3 -6 l3 6z M77 104 l3 -6 l3 6z" fill="#5a8a9a"/><path d="M-1 48 L6 57 L14 64 V85 H-1Z" fill="#8a7452"/><path d="M-1 52 L5 60 V80 H-1Z" fill="#6a7a8a"/><path d="M16.5 34 Q16.5 27.6 27 27.6 Q37.2 27.6 37.2 34 V82 H16.5Z" fill="#7a6c58"/><rect x="17" y="44" width="20" height="12" fill="#4e4c44" opacity="0.75"/><rect x="30" y="64" width="3" height="10" fill="#4a4a48"/><path d="M16.5 34 Q16.5 27.6 27 27.6 V82 H16.5Z" fill="#8a7a60" opacity="0.5"/><path d="M15 65 H24 L40 76 V96 H15Z" fill="#b4a48c"/><path d="M42.3 29 L43 40 L45 44 L46 50 L48.5 54 V98 H37.5 V54 L39.5 50 L40.5 44 L41.6 40Z" fill="#9a6a58"/><path d="M42.3 29 L43 40 L45 44 L46 50 L48.5 54 V98 H44 Z" fill="#8a5a4c"/><path d="M-1 77 Q6 72 13 74 Q20 76 24 84 Q32 88 40 92 Q46 94 50 104 H-1Z" fill="#43591f"/><path d="M-1 88 Q10 84 20 92 Q34 92 42 104 H-1Z" fill="#30461a"/><ellipse cx="12" cy="79" rx="5" ry="2.5" fill="#5f7a2c"/><ellipse cx="30" cy="93" rx="6" ry="2.5" fill="#55702a"/><path d="M89 48 L94 52 V104 H89Z" fill="#6e6a5a"/><path d="M94 50 L100 48 H105.5 V104 H94Z" fill="#6a5c4c"/><rect x="96" y="60" width="9" height="3" fill="#4a4038"/><rect x="100" y="50" width="3" height="54" fill="#544a40"/><path d="M106 28 L125 24.6 L126.2 27 L128 86 H106Z" fill="url(#gold)"/><path d="M125 24.6 L126.2 27 L128 86 H126Z" fill="#7a7a88"/><path d="M108 30 L108.5 86" stroke="#e8d8a0" stroke-width="0.4" opacity="0.6"/><path d="M110.3 30 L111 86" stroke="#e8d8a0" stroke-width="0.4" opacity="0.6"/><path d="M112.6 30 L113.5 86" stroke="#e8d8a0" stroke-width="0.4" opacity="0.6"/><path d="M114.9 30 L116 86" stroke="#e8d8a0" stroke-width="0.4" opacity="0.6"/><path d="M117.2 30 L118.5 86" stroke="#e8d8a0" stroke-width="0.4" opacity="0.6"/><path d="M119.5 30 L121 86" stroke="#e8d8a0" stroke-width="0.4" opacity="0.6"/><path d="M121.8 30 L123.5 86" stroke="#e8d8a0" stroke-width="0.4" opacity="0.6"/><path d="M124.1 30 L126 86" stroke="#e8d8a0" stroke-width="0.4" opacity="0.6"/><path d="M107 88 L110 84 L114 82 L118 77 L121 74 L124 70 L126 74 L128 80 H135.5 V104 H107Z" fill="#dcaa4c"/><path d="M107 88 L110 84 L114 82 L118 77 L121 74 L124 70 V104 H107Z" fill="#cc9a3e" opacity="0.6"/><rect x="109" y="88" width="1" height="14" fill="#b8842c" opacity="0.7"/><rect x="112" y="88" width="1" height="14" fill="#b8842c" opacity="0.7"/><rect x="115" y="88" width="1" height="14" fill="#b8842c" opacity="0.7"/><rect x="118" y="88" width="1" height="14" fill="#b8842c" opacity="0.7"/><rect x="121" y="88" width="1" height="14" fill="#b8842c" opacity="0.7"/><rect x="124" y="88" width="1" height="14" fill="#b8842c" opacity="0.7"/><rect x="127" y="88" width="1" height="14" fill="#b8842c" opacity="0.7"/><rect x="130" y="88" width="1" height="14" fill="#b8842c" opacity="0.7"/><rect x="133" y="88" width="1" height="14" fill="#b8842c" opacity="0.7"/><path d="M135.5 62 L142 57 V96 H135.5Z" fill="#b09258"/><path d="M142 57 L147 50 L152 47 V98 H142Z" fill="#c8a860"/><path d="M152 47 L156 42 L160 32 L161 30 V98 H152Z" fill="#c89a48"/><clipPath id="c6"><path d="M135.5 62 L142 57 L147 50 L152 47 L156 42 L160 32 L161 30 V98 H135.5Z"/></clipPath><g clip-path="url(#c6)"><path d="M137 28 V98" stroke="#efe4c0" stroke-width="0.6" opacity="0.65"/><path d="M139.5 28 V98" stroke="#efe4c0" stroke-width="0.6" opacity="0.65"/><path d="M143.5 28 V98" stroke="#efe4c0" stroke-width="0.6" opacity="0.65"/><path d="M146 28 V98" stroke="#efe4c0" stroke-width="0.6" opacity="0.65"/><path d="M149 28 V98" stroke="#efe4c0" stroke-width="0.6" opacity="0.65"/><path d="M153.5 28 V98" stroke="#efe4c0" stroke-width="0.6" opacity="0.65"/><path d="M156.5 28 V98" stroke="#efe4c0" stroke-width="0.6" opacity="0.65"/><path d="M159 28 V98" stroke="#efe4c0" stroke-width="0.6" opacity="0.65"/><path d="M135 36 H161" stroke="#8a6a30" stroke-width="0.5" opacity="0.35"/><path d="M135 40 H161" stroke="#8a6a30" stroke-width="0.5" opacity="0.35"/><path d="M135 44 H161" stroke="#8a6a30" stroke-width="0.5" opacity="0.35"/><path d="M135 48 H161" stroke="#8a6a30" stroke-width="0.5" opacity="0.35"/><path d="M135 52 H161" stroke="#8a6a30" stroke-width="0.5" opacity="0.35"/><path d="M135 56 H161" stroke="#8a6a30" stroke-width="0.5" opacity="0.35"/><path d="M135 60 H161" stroke="#8a6a30" stroke-width="0.5" opacity="0.35"/><path d="M135 64 H161" stroke="#8a6a30" stroke-width="0.5" opacity="0.35"/><path d="M135 68 H161" stroke="#8a6a30" stroke-width="0.5" opacity="0.35"/><path d="M135 72 H161" stroke="#8a6a30" stroke-width="0.5" opacity="0.35"/><path d="M135 76 H161" stroke="#8a6a30" stroke-width="0.5" opacity="0.35"/><path d="M135 80 H161" stroke="#8a6a30" stroke-width="0.5" opacity="0.35"/><path d="M135 84 H161" stroke="#8a6a30" stroke-width="0.5" opacity="0.35"/><path d="M135 88 H161" stroke="#8a6a30" stroke-width="0.5" opacity="0.35"/><path d="M135 92 H161" stroke="#8a6a30" stroke-width="0.5" opacity="0.35"/><path d="M135 96 H161" stroke="#8a6a30" stroke-width="0.5" opacity="0.35"/></g><path d="M135.5 62 L142 57 L147 50 L152 47 L156 42 L161 30 V26 H135Z" fill="url(#sk2)" opacity="0"/><path d="M128 104 Q132 94 138 93 Q144 90 148 96 Q154 92 161 96 V104Z" fill="#3c5a1e"/></g><path d="M135 20 V57.5 L142 55.5 L147 48.5 L152 45.5 L156 40.5 L160.5 28 V20Z" fill="none"/></svg></div><h4>建筑企业办理建筑资质需要注意哪些细节</h4><div class="d">2019.08.29</div><div class="tx"><div>在日常生活中，很多人都非常关注施工资质的办理，尤其是</div><div>一些部门需要相关的资质证书，他们需要能够在很短的时间</div><div>内完成。现在建筑业的人很难取得建筑资格。这是因为国家</div><div class="l">正在大力简化建筑企业的资质，加强个体从业人员...</div></div></div>
<div class="news" style="top:284px"><div class="im"><svg width="160" height="102" viewBox="0 0 160 102"><defs><radialGradient id="sk3" cx="0.36" cy="0.78" r="0.95"><stop offset="0" stop-color="#ffffff"/><stop offset="0.25" stop-color="#e6eefa"/><stop offset="0.5" stop-color="#a9c2ec"/><stop offset="0.75" stop-color="#5d86d4"/><stop offset="1" stop-color="#2f56b4"/></radialGradient><filter id="b3" x="-5%" y="-5%" width="110%" height="110%"><feGaussianBlur stdDeviation="0.55"/></filter></defs><rect width="160" height="102" fill="url(#sk3)"/><g filter="url(#b3)"><path d="M53 6 L104 17 L140 21 M53 6 L33 20 M32 21 L14 48 L-1 76 M36 20 L8 62" stroke="#4a4a6a" stroke-width="0.6" fill="none"/><path d="M141 24 V50 M145 24 V46" stroke="#5a5a7a" stroke-width="0.5"/><path d="M3 104 L51 7 L55 9 L11 104Z" fill="#e8922a"/><path d="M3 104 L51 7" stroke="#b05a18" stroke-width="1"/><path d="M11 104 L55 9" stroke="#f0b040" stroke-width="0.8"/><path d="M51 10 l4.4 2.2" stroke="#8a4a1a" stroke-width="1.1"/><path d="M52.6 10.2 l2 -3.6" stroke="#dfe8f6" stroke-width="0.9" opacity="0.55"/><path d="M48 16.0625 l4.4 2.2" stroke="#8a4a1a" stroke-width="1.1"/><path d="M49.6 16.2625 l2 -3.6" stroke="#dfe8f6" stroke-width="0.9" opacity="0.55"/><path d="M45 22.125 l4.4 2.2" stroke="#8a4a1a" stroke-width="1.1"/><path d="M46.6 22.325 l2 -3.6" stroke="#dfe8f6" stroke-width="0.9" opacity="0.55"/><path d="M42 28.1875 l4.4 2.2" stroke="#8a4a1a" stroke-width="1.1"/><path d="M43.6 28.3875 l2 -3.6" stroke="#dfe8f6" stroke-width="0.9" opacity="0.55"/><path d="M39 34.25 l4.4 2.2" stroke="#8a4a1a" stroke-width="1.1"/><path d="M40.6 34.45 l2 -3.6" stroke="#dfe8f6" stroke-width="0.9" opacity="0.55"/><path d="M36 40.3125 l4.4 2.2" stroke="#8a4a1a" stroke-width="1.1"/><path d="M37.6 40.5125 l2 -3.6" stroke="#dfe8f6" stroke-width="0.9" opacity="0.55"/><path d="M33 46.375 l4.4 2.2" stroke="#8a4a1a" stroke-width="1.1"/><path d="M34.6 46.575 l2 -3.6" stroke="#dfe8f6" stroke-width="0.9" opacity="0.55"/><path d="M30 52.4375 l4.4 2.2" stroke="#8a4a1a" stroke-width="1.1"/><path d="M31.6 52.6375 l2 -3.6" stroke="#dfe8f6" stroke-width="0.9" opacity="0.55"/><path d="M27 58.5 l4.4 2.2" stroke="#8a4a1a" stroke-width="1.1"/><path d="M28.6 58.7 l2 -3.6" stroke="#dfe8f6" stroke-width="0.9" opacity="0.55"/><path d="M24 64.5625 l4.4 2.2" stroke="#8a4a1a" stroke-width="1.1"/><path d="M25.6 64.7625 l2 -3.6" stroke="#dfe8f6" stroke-width="0.9" opacity="0.55"/><path d="M21 70.625 l4.4 2.2" stroke="#8a4a1a" stroke-width="1.1"/><path d="M22.6 70.825 l2 -3.6" stroke="#dfe8f6" stroke-width="0.9" opacity="0.55"/><path d="M18 76.6875 l4.4 2.2" stroke="#8a4a1a" stroke-width="1.1"/><path d="M19.6 76.8875 l2 -3.6" stroke="#dfe8f6" stroke-width="0.9" opacity="0.55"/><path d="M15 82.75 l4.4 2.2" stroke="#8a4a1a" stroke-width="1.1"/><path d="M16.6 82.95 l2 -3.6" stroke="#dfe8f6" stroke-width="0.9" opacity="0.55"/><path d="M12 88.8125 l4.4 2.2" stroke="#8a4a1a" stroke-width="1.1"/><path d="M13.6 89.0125 l2 -3.6" stroke="#dfe8f6" stroke-width="0.9" opacity="0.55"/><path d="M9 94.875 l4.4 2.2" stroke="#8a4a1a" stroke-width="1.1"/><path d="M10.6 95.075 l2 -3.6" stroke="#dfe8f6" stroke-width="0.9" opacity="0.55"/><path d="M6 100.938 l4.4 2.2" stroke="#8a4a1a" stroke-width="1.1"/><path d="M7.6 101.138 l2 -3.6" stroke="#dfe8f6" stroke-width="0.9" opacity="0.55"/><rect x="36.58" y="32.92" width="5" height="2.4" fill="#5a3a30"/><rect x="30.6" y="45.4" width="5" height="2.4" fill="#5a3a30"/><rect x="24.62" y="57.88" width="5" height="2.4" fill="#5a3a30"/><rect x="18.18" y="71.32" width="5" height="2.4" fill="#5a3a30"/><rect x="12.2" y="83.8" width="5" height="2.4" fill="#5a3a30"/><path d="M9 104 L30 58 L32 59 L15 104Z" fill="#6a6a72"/><path d="M33 19 L51 18 L52 24 L34 25Z" fill="#3a3a4a"/><ellipse cx="43" cy="16.5" rx="3.5" ry="2.4" fill="#f0c020"/><path d="M52 19 L154 20 L154 24.5 L52 23.5Z" fill="#a0544a"/><path d="M52 19.2 L154 20.3" stroke="#c86a4a" stroke-width="0.8"/><path d="M56 19.5 l2.5 4 l2.5 -4" stroke="#d9a090" stroke-width="0.5" fill="none"/><path d="M61 19.5 l2.5 4 l2.5 -4" stroke="#d9a090" stroke-width="0.5" fill="none"/><path d="M66 19.5 l2.5 4 l2.5 -4" stroke="#d9a090" stroke-width="0.5" fill="none"/><path d="M71 19.5 l2.5 4 l2.5 -4" stroke="#d9a090" stroke-width="0.5" fill="none"/><path d="M76 19.5 l2.5 4 l2.5 -4" stroke="#d9a090" stroke-width="0.5" fill="none"/><path d="M81 19.5 l2.5 4 l2.5 -4" stroke="#d9a090" stroke-width="0.5" fill="none"/><path d="M86 19.5 l2.5 4 l2.5 -4" stroke="#d9a090" stroke-width="0.5" fill="none"/><path d="M91 19.5 l2.5 4 l2.5 -4" stroke="#d9a090" stroke-width="0.5" fill="none"/><path d="M96 19.5 l2.5 4 l2.5 -4" stroke="#d9a090" stroke-width="0.5" fill="none"/><path d="M101 19.5 l2.5 4 l2.5 -4" stroke="#d9a090" stroke-width="0.5" fill="none"/><path d="M106 19.5 l2.5 4 l2.5 -4" stroke="#d9a090" stroke-width="0.5" fill="none"/><path d="M111 19.5 l2.5 4 l2.5 -4" stroke="#d9a090" stroke-width="0.5" fill="none"/><path d="M116 19.5 l2.5 4 l2.5 -4" stroke="#d9a090" stroke-width="0.5" fill="none"/><path d="M121 19.5 l2.5 4 l2.5 -4" stroke="#d9a090" stroke-width="0.5" fill="none"/><path d="M126 19.5 l2.5 4 l2.5 -4" stroke="#d9a090" stroke-width="0.5" fill="none"/><path d="M131 19.5 l2.5 4 l2.5 -4" stroke="#d9a090" stroke-width="0.5" fill="none"/><path d="M136 19.5 l2.5 4 l2.5 -4" stroke="#d9a090" stroke-width="0.5" fill="none"/><path d="M141 19.5 l2.5 4 l2.5 -4" stroke="#d9a090" stroke-width="0.5" fill="none"/><path d="M146 19.5 l2.5 4 l2.5 -4" stroke="#d9a090" stroke-width="0.5" fill="none"/><rect x="139" y="18" width="8" height="7" fill="#3a3a48"/><path d="M53 41.5 L56 40.5 L78 74 L75.5 75.5Z" fill="#5a5a5e"/><path d="M55 42 L76 74" stroke="#d0d0d4" stroke-width="0.5"/><path d="M75 72 L90 82" stroke="#6a5a5a" stroke-width="0.5"/><circle cx="90.5" cy="82.5" r="1" fill="#c87040"/><path d="M19 104 L25 86 L28 86 L25 104Z" fill="#7a707a"/><path d="M43 104 L49 81 L52.5 81 L48 104Z" fill="#8a6a70"/><path d="M-1 28 L4 25 L4 28 L-1 32Z" fill="#8090a8"/><path d="M-1 62 L6 56 L8 62 L-1 74Z" fill="#8a90a0"/><path d="M66 104 L74 90 L104 101 L110 104Z" fill="#f2f6fb"/><path d="M70.5 76 L73 79.5 L99 90 L112 97 L108 104 L96 98 L69 84Z" fill="#a8a090"/><path d="M57.5 67 L62 70 L64 72.5 L72 75.5 L70.5 80 L62 77 L60 73Z" fill="#e8b898"/><path d="M100 92 Q108 88 118 92 L130 104 H96Z" fill="#b0a898"/><path d="M106 72 Q104 84 108 90 L112 104 H122 L123 78Z" fill="#1c1a20"/><ellipse cx="110.5" cy="80" rx="5.6" ry="6.6" fill="#e6b494"/><path d="M107 85 q3 2 5 0" stroke="#fff" stroke-width="1" fill="none"/><path d="M101.5 74.5 Q101 64 112 64 Q121.5 64 122.5 74 L124.5 76.5 L101 76.5Z" fill="#f2a822"/><path d="M100.5 75 Q112 71.5 124.8 75.5 L124.5 77.5 Q112 74 101 77.5Z" fill="#d88a18"/><path d="M128 70 L148 58 L161 66 V104 H122 L128 88Z" fill="#161a2c"/><path d="M130 68 L134 62 L140 64 L134 80Z" fill="#e8ecf4"/><path d="M133 72 l2 -2 l1 10z" fill="#3050a0"/><ellipse cx="131" cy="57.5" rx="7" ry="8.6" fill="#e8b890" transform="rotate(-12 131 57.5)"/><path d="M128 63 q3 2.4 6 0.5" stroke="#fff" stroke-width="1" fill="none"/><path d="M134 47 Q142 48 142 58 L137 66 L138 54Z" fill="#1a1a20"/><path d="M138 52 L136.5 66" stroke="#3a4a6a" stroke-width="1"/><path d="M120.5 52 Q118.5 41 131 40.8 Q142 41 144 51 L146 54.5 Q132 48.5 120 55.5Z" fill="#f4ac24"/><path d="M119.5 53.5 Q132 47 146.5 54 L146 56 Q132 50 120 56.5Z" fill="#d88c18"/></g></svg></div><h4>工程造价审核的要点</h4><div class="d">2019.08.29</div><div class="tx"><div>1、核准工程量。工程量是编制决算最基本的内容，也是整</div><div>个工程取费和计税的基础。工程量一旦不准，就会导致整个</div><div>工程造价不实。审核人员要在工程决算审核前进行认真地调</div><div class="l">查和实地勘察，摸清施工情况，熟悉施工图纸和变...</div></div></div>

</div>
<div class="panel" id="p3" style="left:1128px;top:109px;width:548px;height:402px;background:#fcfdfd">
<div class="ph" style="height:36px"><div class="t" style="line-height:34px">我的日程</div><div class="cbtn" style="left:357px;width:74px">返回今天</div><div class="cbtn" style="left:439px;width:48px">上周</div><div class="cbtn" style="left:495px;width:48px">下周</div></div>
<div class="cal" style="top:43px;line-height:17px"><div>日</div><div>一</div><div>二</div><div>三</div><div>四</div><div>五</div><div>六</div></div>
<div class="hl" style="top:78px"></div>
<div class="today"></div>
<div class="cal" style="top:86px;line-height:17px;font-size:14px"><div><i>6</i></div><div><i>7</i></div><div><i>8</i></div><div><i>9</i></div><div><i>10</i></div><div><i>11</i></div><div><i>12</i></div></div>
<div class="hl" style="top:121px"></div>
<div style="position:absolute;left:13px;top:129px;line-height:18px;color:#3d7eb5;font-size:13px">2019-10-08日程</div>
<div class="hl" style="top:153px;left:3px;width:542px"></div>
<svg style="position:absolute;left:519px;top:164px" width="12" height="12" viewBox="0 0 12 12"><path d="M0.9 0.9 L11.1 11.1 M11.1 0.9 L0.9 11.1" stroke="#4a97e0" stroke-width="1.1" fill="none"/></svg>
</div>
<div class="panel" id="p4" style="left:12px;top:521px;width:548px;height:420px">
<div class="ph"><div class="t">我的申请</div><div class="more"><svg width="36" height="11" viewBox="0 0 36 11"><text x="4" y="8.4" font-family="Liberation Sans,sans-serif" font-size="7.4" font-weight="bold" fill="#ff6a0a" textLength="23" lengthAdjust="spacingAndGlyphs">MORE</text><path d="M29 2.6 L32.2 5.6 L29 8.6Z" fill="#ff6a0a"/></svg></div></div>
<ul class="lst">
<li>设计变更_领导审批__完成<span>2019.08.28</span></li>
<li>_领导审批_罗丹,_运行中<span>2019.07.01</span></li>
<li>_领导审批_肖晴,_运行中<span>2019.03.04</span></li>
<li>_领导审批_胡建,_运行中<span>2019.03.04</span></li>
<li>_领导审批_胡建,_运行中<span>2019.03.04</span></li>
<li>_领导审批_胡建,_运行中<span>2019.03.04</span></li>
<li>_领导审批_胡建,_运行中<span>2019.03.04</span></li>
<li>_领导审批_胡建,_运行中<span>2019.03.04</span></li>
<li>_领导审批__完成<span>2019.03.04</span></li>
<li>_领导审批_肖晴,_运行中<span>2019.03.04</span></li>
</ul>
</div>
<div class="panel" id="p5" style="left:570px;top:521px;width:548px;height:420px">
<div class="ph"><div class="t">我的待办</div><div class="more"><svg width="36" height="11" viewBox="0 0 36 11"><text x="4" y="8.4" font-family="Liberation Sans,sans-serif" font-size="7.4" font-weight="bold" fill="#ff6a0a" textLength="23" lengthAdjust="spacingAndGlyphs">MORE</text><path d="M29 2.6 L32.2 5.6 L29 8.6Z" fill="#ff6a0a"/></svg></div></div>
<ul class="lst">
<li>销售合同_章燕<span>2019-09-29 16:21</span></li>
<li>进度维护(未提交)<span>2019.05.20</span></li>
<li>设备油耗(未提交)<span>2018.11.23</span></li>
<li>设备油耗(未提交)<span>2018.11.23</span></li>
<li>设备油耗(未提交)<span>2018.11.23</span></li>
<li>设备油耗(未提交)<span>2018.11.23</span></li>
<li>设备维保(未提交)<span>2018.11.23</span></li>
<li>设备检查(未提交)<span>2018.11.23</span></li>
<li>设备检查(未提交)<span>2018.11.23</span></li>
<li>设备检查(未提交)<span>2018.11.23</span></li>
</ul>
</div>
<div class="panel" id="p6" style="left:1128px;top:521px;width:548px;height:420px">
<div class="ph"><div class="t">我的已办</div><div class="more"><svg width="36" height="11" viewBox="0 0 36 11"><text x="4" y="8.4" font-family="Liberation Sans,sans-serif" font-size="7.4" font-weight="bold" fill="#ff6a0a" textLength="23" lengthAdjust="spacingAndGlyphs">MORE</text><path d="M29 2.6 L32.2 5.6 L29 8.6Z" fill="#ff6a0a"/></svg></div></div>
<ul class="lst">
<li>_领导审批_<span>2018.11.23</span></li>
<li>_领导审批_<span>2018.11.23</span></li>
<li>_领导审批_<span>2018.11.24</span></li>
<li>_领导审批_薛保丰,<span>2018.11.29</span></li>
<li>人事调动_部门审批_胡建,<span>2018.11.29</span></li>
<li>_领导审批_<span>2018.12.08</span></li>
<li>_领导审批_胡雪,<span>2018.12.08</span></li>
<li>_领导审批_<span>2018.12.08</span></li>
<li>_领导审批_胡建,<span>2018.12.08</span></li>
<li>港珠澳大桥施工总承包项目_领导审批_<span>2018.12.08</span></li>
</ul>
</div>
<div id="wm" style="position:absolute;left:1545px;top:870px;width:130px;height:46px;opacity:0.62"><svg style="position:absolute;left:2px;top:5px" width="26" height="23" viewBox="0 0 26 23"><path d="M0 11 L6 0.4 H16 Q9 5 8 14 L6 22 L0 11Z" fill="#5c6c9c"/><path d="M11 13 Q12 4 19 2 Q24 5 25 9 Q17 9 11 13Z" fill="#d8764c"/><path d="M10 22 Q13 13 25 11 L19 22Z" fill="#5c6c9c"/></svg><div style="position:absolute;left:29px;top:2px;font-size:23px;line-height:28px;color:#566792;font-weight:bold;white-space:nowrap;letter-spacing:0px">泛普软件</div><div style="position:absolute;left:4px;top:25px;font-family:'Liberation Serif',serif;font-weight:bold;font-size:12.5px;line-height:16px;color:#d8764c;letter-spacing:0.87px;white-space:nowrap">www.fanpusoft.com</div></div>
</body>
</html>
